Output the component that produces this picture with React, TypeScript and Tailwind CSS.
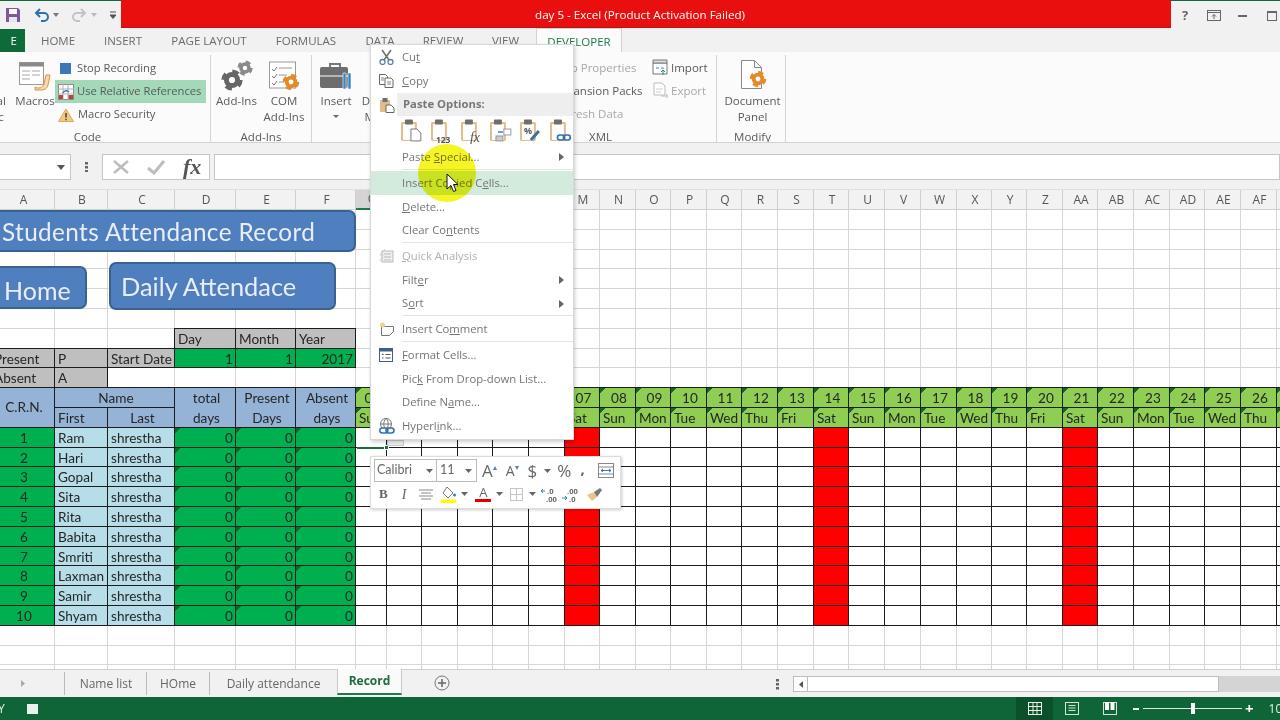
import React from "react";

const colLetters = "A B C D E F G H I J K L M N O P Q R S T U V W X Y Z AA AB AC AD AE AF AG".split(" ");
const dates = ["01","02","03","04","05","06","07","08","09","10","11","12","13","14","15","16","17","18","19","20","21","22","23","24","25","26","27"];
const dayNames = ["Sun","Mon","Tue","Wed","Thu","Fri","Sat"];
const students = ["Ram","Hari","Gopal","Sita","Rita","Babita","Smriti","Laxman","Samir","Shyam"];
const TRI = "bg-[linear-gradient(135deg,#17642c_4px,transparent_4px)]";
const GRID = "border-r border-b border-[#d6d6d6]";
const BLK = "border border-[#1c1c1c] ml-[-1px] mt-[-1px] relative overflow-hidden whitespace-nowrap pl-[3px] pr-[3px] leading-[21px]";
const CTR = "text-center !pl-[5px] !pr-[2px]";
const RGT = "text-right !pr-[2px]";

function Blank({ n = 1 }: { n?: number }) {
  return <>{Array.from({ length: n }).map((_, i) => <div key={i} className={GRID} />)}</>;
}

function Sheet() {
  const dataCols = 27;
  return (
    <div className="grid grid-cols-[64px_53px_67px_61px_60px_60px_31px_35px_36px_35px_36px_36px_35px_36px_35px_36px_35px_36px_36px_35px_36px_36px_36px_35px_35px_36px_35px_36px_36px_35px_36px_36px_36px] grid-rows-[20px] auto-rows-[19.8px] ml-[-9px] w-[1300px] text-[13.6px] text-[#262626] font-['Lato',sans-serif]">
      {colLetters.map((c, i) => (
        <div key={c} className={`flex items-center justify-center pl-[2px] border-r border-b font-['Open_Sans',sans-serif] text-[12px] text-[#555] ${i === 6 ? "bg-[#d4d4d4] border-r-[#bbb] border-b-2 border-b-[#1f7a4a]" : "bg-[#f2f2f2] border-[#cfcfcf]"}`}>{c}</div>
      ))}
      <Blank n={33 * 6} />
      {/* row 7 */}
      <Blank n={3} />
      {["Day", "Month", "Year"].map((t) => <div key={t} className={`${BLK} bg-[#bfbfbf]`}>{t}</div>)}
      <Blank n={27} />
      {/* row 8 */}
      <div className={`${BLK} bg-[#bfbfbf]`}>Present</div>
      <div className={`${BLK} bg-[#bfbfbf]`}>P</div>
      <div className={`${BLK} bg-[#bfbfbf]`}>Start Date</div>
      {["1", "1", "2017"].map((t, i) => <div key={i} className={`${BLK} ${RGT} bg-[#00b050]`}>{t}</div>)}
      <Blank n={27} />
      {/* row 9 */}
      <div className={`${BLK} bg-[#bfbfbf]`}>Absent</div>
      <div className={`${BLK} bg-[#bfbfbf]`}>A</div>
      <Blank n={31} />
      {/* row 10 */}
      <div className={`${BLK} row-span-2 bg-[#95b3d7] flex items-center justify-center !pl-[5px] !pr-[2px] pt-[1px]`}>C.R.N.</div>
      <div className={`${BLK} ${CTR} col-span-2 bg-[#95b3d7]`}>Name</div>
      {[["total", "days"], ["Present", "Days"], ["Absent", "days"]].map((t) => (
        <div key={t[0]} className={`${BLK} ${CTR} row-span-2 bg-[#95b3d7]`}>
          <div className="h-[20px]">{t[0]}</div>
          <div className="h-[20px]">{t[1]}</div>
        </div>
      ))}
      {dates.map((d) => <div key={d} className={`${BLK} ${CTR} ${TRI} bg-[#8fce52]`}>{d}</div>)}
      {/* row 11 */}
      <div className={`${BLK} bg-[#95b3d7]`}>First</div>
      <div className={`${BLK} ${CTR} bg-[#95b3d7]`}>Last</div>
      {dates.map((d, i) => <div key={d} className={`${BLK} ${TRI} bg-[#8fce52] !pl-[3px] !pr-0`}>{dayNames[i % 7]}</div>)}
      {/* data */}
      {students.map((s, r) => (
        <React.Fragment key={s}>
          <div className={`${BLK} ${CTR} bg-[#00b050]`}>{r + 1}</div>
          <div className={`${BLK} bg-[#b7dee8]`}>{s}</div>
          <div className={`${BLK} bg-[#b7dee8]`}>shrestha</div>
          {[0, 1, 2].map((k) => <div key={k} className={`${BLK} ${RGT} ${TRI} bg-[#00b050]`}>0</div>)}
          {Array.from({ length: dataCols }).map((_, i) => (
            <div key={i} className={`${BLK} ${i % 7 === 6 ? "bg-[#ff0000]" : "bg-white"}`} />
          ))}
        </React.Fragment>
      ))}
      <Blank n={33 * 3} />
    </div>
  );
}

function Gear({ cx, cy, r, c }: { cx: number; cy: number; r: number; c: string }) {
  return (
    <g>
      <circle cx={cx} cy={cy} r={r * 0.62} fill="none" stroke={c} strokeWidth={r * 0.55} />
      <circle cx={cx} cy={cy} r={r * 0.98} fill="none" stroke={c} strokeWidth={r * 0.4} strokeDasharray={`${r * 0.75} ${r * 0.79}`} />
    </g>
  );
}

function BigBtn({ w, icon, lines, caret }: { w: string; icon: React.ReactNode; lines: string[]; caret?: boolean }) {
  return (
    <div className={`${w} shrink-0 flex flex-col items-center text-center leading-[16px]`}>
      <div className="h-[38px] shrink-0 flex items-center justify-center pt-[3px]">{icon}</div>
      {lines.map((l) => <div key={l} className="whitespace-nowrap shrink-0">{l}</div>)}
      {caret && (
        <svg className="mt-[6px] shrink-0" width="6" height="3" viewBox="0 0 6 3"><path d="M0 0h6L3 3z" fill="#666" /></svg>
      )}
    </div>
  );
}

function Group({ w, label, labelCls = "", children }: { w: string; label: string; labelCls?: string; children: React.ReactNode }) {
  return (
    <div className={`${w} shrink-0 relative flex flex-col h-[87px] mt-[3px] border-r border-[#d4d4d4]`}>
      <div className="h-[71px] shrink-0 flex">{children}</div>
      <div className={`h-[16px] shrink-0 text-center leading-[21px] ${labelCls}`}>{label}</div>
    </div>
  );
}

function Ribbon() {
  return (
    <div className="h-[91px] flex bg-[#fbfbfb] border-b border-[#d2d2d2] font-['Open_Sans',sans-serif] text-[11.5px] text-[#5a5a5a] overflow-hidden">
      <Group w="w-[246px] ml-[-35px]" label="Code">
        <BigBtn w="w-[50px]" lines={["Visual", "Basic"]} icon={
          <svg width="32" height="30" viewBox="0 0 32 30"><rect x="3" y="2" width="22" height="24" fill="#fff" stroke="#8a8a8a" /><path d="M6 8h16M6 13h16M6 18h16M14 4v20" stroke="#9a9a9a" /></svg>
        } />
        <BigBtn w="w-[40px]" lines={["Macros"]} icon={
          <svg width="34" height="30" viewBox="0 0 34 30"><rect x="1.5" y="1.5" width="24" height="22" fill="#fff" stroke="#9a9a9a" /><rect x="1.5" y="1.5" width="24" height="4" fill="#8a8a8a" /><path d="M4 10h8M14 10h8M4 14h8M14 14h8M4 18h8" stroke="#a8a8a8" /><path d="M17 26c3 2 8 1 9-3l2-9h4l-2 10c-1 4-4 5-7 5h-6z" fill="#f3d9b5" stroke="#e0913a" /></svg>
        } />
        <div className="w-[153px] flex flex-col pt-[2px] text-[11.2px]">
          <div className="h-[23px] shrink-0 flex items-center pl-[5px] gap-[6px]">
            <div className="w-[11px] h-[11px] bg-[#3d78b5]" /><span>Stop Recording</span>
          </div>
          <div className="h-[23px] shrink-0 w-[151px] flex items-center pl-[3px] gap-[3px] bg-[#a3d8b8]">
            <svg width="16" height="16" viewBox="0 0 16 16"><rect x=".5" y=".5" width="15" height="15" fill="#fff" stroke="#8c8c8c" /><path d="M0 5h16M0 10h16M5 0v16M10 0v16" stroke="#b0b0b0" /><rect x="1" y="11" width="4" height="4" fill="#b5463a" /><rect x="10.5" y="11" width="4.500" height="4" fill="#b5463a" /><path d="M5 9a3.500 3.500 0 0 1 6-1" stroke="#3d78b5" strokeWidth="1.500" fill="none" /></svg>
            <span>Use Relative References</span>
          </div>
          <div className="h-[23px] shrink-0 flex items-center pl-[3px] gap-[4px]">
            <svg width="16" height="14" viewBox="0 0 16 14"><path d="M8 1l7.500 12.500h-15z" fill="#eccb8a" stroke="#d9a95a" /><path d="M8 5v4.500M8 10.800v1.500" stroke="#5a4620" strokeWidth="1.600" /></svg>
            <span>Macro Security</span>
          </div>
        </div>
      </Group>
      <Group w="w-[101px]" label="Add-Ins">
        <BigBtn w="w-[51px]" lines={["Add-Ins"]} icon={
          <svg width="34" height="32" viewBox="0 0 34 32"><Gear cx={12} cy={20} r={9} c="#666" /><Gear cx={25} cy={8} r={6.500} c="#8a8a8a" /></svg>
        } />
        <BigBtn w="w-[44px]" lines={["COM", "Add-Ins"]} icon={
          <svg width="32" height="32" viewBox="0 0 32 32"><rect x="1.500" y="2" width="26" height="26" fill="#fff" stroke="#9a9a9a" /><path d="M4 9l2 2 3-4M4 16l2 2 3-4M4 23l2 2 3-4" stroke="#777" fill="none" /><path d="M11 8h13M11 15h8M11 22h5" stroke="#999" /><Gear cx={23} cy={22} r={7} c="#e48a2a" /></svg>
        } />
      </Group>
      <div className="w-[240px] shrink-0 flex flex-col h-[87px] mt-[3px]">
        <div className="flex">
          <BigBtn w="w-[48px]" lines={["Insert"]} caret icon={
            <svg width="34" height="30" viewBox="0 0 34 30"><path d="M11 6V3h10v3" stroke="#777" strokeWidth="2" fill="none" /><rect x="1" y="6" width="28" height="21" rx="2" fill="#6d6d6d" /><path d="M1 15h28" stroke="#fff" /><path d="M24 12h3v16h-3zM29 12h3v16h-3z" fill="#3a82c4" stroke="#fff" strokeWidth=".6" /></svg>
          } />
          <BigBtn w="w-[40px]" lines={["Design", "Mode"]} icon={<div className="w-[20px] h-[28px] bg-[#777]" />} />
        </div>
      </div>
      <Group w="w-[166px] ml-[-1px]" label="XML" labelCls="pr-[66px]">
        <div className="w-[101px] shrink-0 flex flex-col pt-[1px] pl-[3px] whitespace-nowrap">
          <div className="h-[23px] shrink-0 leading-[23px] text-[#a8a8a8]">Map Properties</div>
          <div className="h-[23px] shrink-0 leading-[23px]">Expansion Packs</div>
          <div className="h-[23px] shrink-0 leading-[23px] text-[#a8a8a8]">Refresh Data</div>
        </div>
        <div className="flex flex-col pt-[1px]">
          <div className="h-[23px] shrink-0 flex items-center gap-[1px]">
            <svg width="18" height="17" viewBox="0 0 18 17"><path d="M1 4h14v11H1z" fill="#fff" stroke="#777" /><path d="M1 1h14v3H1z" fill="#ddd" stroke="#777" /><path d="M4 9h3M9 9h3" stroke="#3a82c4" /><path d="M11 16V11M9 13l2-2 2 2" stroke="#1f9a5a" fill="none" /></svg>
            <span>Import</span>
          </div>
          <div className="h-[23px] shrink-0 flex items-center gap-[1px] text-[#a8a8a8]">
            <svg width="18" height="17" viewBox="0 0 18 17"><path d="M2 1h8l3 3v9H2z" fill="#fff" stroke="#bbb" /><path d="M4 7h7M4 10h5" stroke="#ccc" /><path d="M9 14h7M14 12l2 2-2 2" stroke="#bbb" fill="none" /></svg>
            <span>Export</span>
          </div>
        </div>
      </Group>
      <Group w="w-[69px] pl-[3px]" label="Modify">
        <BigBtn w="w-full" lines={["Document", "Panel"]} icon={
          <svg width="30" height="33" viewBox="0 0 30 33"><path d="M3.500 1.500h13l7 7v21h-20z" fill="#fff" stroke="#8a8a8a" /><path d="M16.500 1.500v7h7" fill="none" stroke="#8a8a8a" /><Gear cx={20} cy={20} r={7} c="#e48a2a" /></svg>
        } />
      </Group>
    </div>
  );
}

function Tabs() {
  const tabs: [string, string][] = [["HOME", "w-[66px]"], ["INSERT", "w-[64px]"], ["PAGE LAYOUT", "w-[108px]"], ["FORMULAS", "w-[86px]"], ["DATA", "w-[62px]"], ["REVIEW", "w-[64px]"], ["VIEW", "w-[61px]"]];
  return (
    <div className="h-[24px] flex bg-[#f1f1f1] font-['Open_Sans',sans-serif] text-[11.5px] text-[#6a6a6a]">
      <div className="w-[25px] bg-[#0f6a3a] text-white flex items-center justify-end pr-[8px] mt-[1px]">E</div>
      {tabs.map(([t, w]) => <div key={t} className={`${w} flex items-center justify-center pt-[1px]`}>{t}</div>)}
      <div className="w-[86px] h-[25px] flex items-center justify-center pt-[1px] bg-[#fbfbfb] border-x border-t border-[#d2d2d2] text-[#1f7a4a]">DEVELOPER</div>
    </div>
  );
}

function TitleBar() {
  return (
    <div className="h-[28px] flex bg-[#f1f1f1] border-t border-[#14673c] font-['Open_Sans',sans-serif]">
      <div className="w-[121px] flex items-center relative">
        <svg className="ml-[5px]" width="16" height="16" viewBox="0 0 16 16"><path d="M1 1h12l2 2v12H1z" fill="#7a5a9a" /><rect x="4" y="2" width="8" height="5" fill="#fff" /><rect x="4" y="10" width="8" height="5" fill="#e9e4ef" /></svg>
        <svg className="ml-[13px]" width="16" height="14" viewBox="0 0 16 14"><path d="M6 1L2 5l4 4M2 5h8a4 4 0 0 1 0 8H7" fill="none" stroke="#2f6fb0" strokeWidth="2" /></svg>
        <svg className="ml-[3px]" width="6" height="4" viewBox="0 0 6 4"><path d="M0 0h6L3 4z" fill="#777" /></svg>
        <svg className="ml-[12px]" width="16" height="14" viewBox="0 0 16 14"><path d="M10 1l4 4-4 4M14 5H6a4 4 0 0 0 0 8h3" fill="none" stroke="#c4c4c4" strokeWidth="2" /></svg>
        <svg className="ml-[4px]" width="6" height="4" viewBox="0 0 6 4"><path d="M0 0h6L3 4z" fill="#bbb" /></svg>
        <svg className="ml-[13px]" width="6" height="8" viewBox="0 0 6 8"><path d="M0 1h6M0 4h6L3 7.500 0 4" stroke="#555" fill="#555" /></svg>
      </div>
      <div className="w-[1050px] h-[28px] mt-[-1px] bg-[#ea0f0f] border-b border-[#b31818] flex items-center justify-center pt-[2px] pr-[12px] text-white text-[11.6px]">day 5 - Excel (Product Activation Failed)</div>
      <div className="flex-1 relative flex items-center text-[#666] pt-[2px]">
        <span className="ml-[11px] w-[10px] font-bold text-[13px]">?</span>
        <svg className="ml-[15px]" width="14" height="11" viewBox="0 0 14 11"><rect x=".5" y=".5" width="13" height="10" fill="none" stroke="#666" /><path d="M.5 2.500h13M7 9V4.500M5 6.500l2-2 2 2" stroke="#666" fill="none" /></svg>
        <div className="ml-[17px] w-[9px] h-[2px] bg-[#666]" />
        <div className="ml-[20px] w-[10px] h-[10px] border border-t-2 border-[#666] shrink-0" />
      </div>
    </div>
  );
}

function FormulaBar() {
  return (
    <div className="h-[47px] bg-[#f1f1f1] flex items-start pt-[11px] font-['Open_Sans',sans-serif] border-b border-[#e0e0e0]">
      <div className="w-[71px] h-[26px] bg-white border border-[#c6c6c6] border-l-0 flex items-center justify-end pr-[5px]">
        <svg width="8" height="5" viewBox="0 0 8 5"><path d="M0 0h8L4 5z" fill="#555" /></svg>
      </div>
      <div className="w-[31px] h-[26px] flex items-center justify-center">
        <svg width="3" height="10" viewBox="0 0 3 10"><path d="M0 0h3v2.500H0zM0 4h3v2.500H0zM0 8h3v2H0z" fill="#666" /></svg>
      </div>
      <div className="w-[108px] h-[26px] bg-white border border-[#c6c6c6] flex items-center">
        <svg className="ml-[9px]" width="18" height="16" viewBox="0 0 18 16"><path d="M2 2l14 12M16 2L2 14" stroke="#bdbdbd" strokeWidth="2.500" /></svg>
        <svg className="ml-[16px]" width="20" height="16" viewBox="0 0 20 16"><path d="M2 9l6 5L18 2" stroke="#bdbdbd" strokeWidth="3" fill="none" /></svg>
        <span className="ml-[17px] font-['Liberation_Serif',serif] italic font-bold text-[22px] text-[#555] leading-none">fx</span>
      </div>
      <div className="ml-[4px] flex-1 h-[26px] bg-white border border-[#c6c6c6]" />
    </div>
  );
}

function Shape({ cls, text, textCls }: { cls: string; text: string; textCls: string }) {
  return (
    <div className={`absolute bg-[#4f7fbe] border-2 border-[#3a628f] rounded-[7px] text-[#e9eef6] font-['Lato',sans-serif] flex items-center whitespace-nowrap ${cls}`}>
      <span className={textCls}>{text}</span>
    </div>
  );
}

function Clip({ children }: { children?: React.ReactNode }) {
  return (
    <svg width="24" height="26" viewBox="0 0 24 26">
      <rect x="1" y="4" width="16" height="19" rx="1.500" fill="#e2bd8c" />
      <rect x="3" y="6" width="12" height="16" fill="#fff" />
      <rect x="5" y="1.500" width="8" height="5" rx="1" fill="#6e6e6e" />
      {children}
    </svg>
  );
}

function MenuItem({ h, label, icon, disabled, arrow, hot }: { h: string; label: React.ReactNode; icon?: React.ReactNode; disabled?: boolean; arrow?: boolean; hot?: boolean }) {
  return (
    <div className={`${h} flex items-center ${hot ? "bg-[#d2ebdd]" : ""} ${disabled ? "text-[#b0b0b0]" : "text-[#757575]"}`}>
      <div className="w-[31px] flex justify-center shrink-0">{icon}</div>
      <div className="flex-1 whitespace-nowrap">{label}</div>
      {arrow && <svg className="mr-[9px]" width="5" height="8" viewBox="0 0 5 8"><path d="M0 0l5 4-5 4z" fill="#666" /></svg>}
    </div>
  );
}

const Sep = () => <div className="h-[2px] pl-[31px]"><div className="h-px bg-[#e4e4e4]" /></div>;

function ContextMenu() {
  return (
    <div className="absolute left-[370px] top-[44px] w-[204px] h-[396px] bg-white border border-[#d8d8d8] shadow-[1px_2px_4px_rgba(0,0,0,0.2)] font-['Open_Sans',sans-serif] text-[11.3px]">
      <MenuItem h="h-[24px]" label={<>Cu<u>t</u></>} icon={
        <svg width="15" height="16" viewBox="0 0 15 16"><path d="M3 1l7 10M12 1L5 11" stroke="#6e6e6e" strokeWidth="1.500" /><circle cx="3.500" cy="13" r="2.500" fill="none" stroke="#5b7fa8" strokeWidth="1.300" /><circle cx="11.500" cy="13" r="2.500" fill="none" stroke="#5b7fa8" strokeWidth="1.300" /></svg>
      } />
      <MenuItem h="h-[24px]" label={<><u>C</u>opy</>} icon={
        <svg width="15" height="14" viewBox="0 0 15 14"><path d="M.5.500h6l2 2v8h-8z" fill="#fff" stroke="#666" /><path d="M6 4h6l2 2v7.500H6z" fill="#fff" stroke="#666" /><path d="M2 4h3M2 6h3M8 8h4M8 10h4" stroke="#888" /></svg>
      } />
      <div className="h-[23px] flex items-center">
        <div className="w-[25px] flex justify-end shrink-0 pr-[1px]">
          <svg width="16" height="16" viewBox="0 0 16 16"><rect x="1" y="3" width="10" height="12" fill="#e2bd8c" /><rect x="3.500" y="1" width="5" height="4" fill="#6e6e6e" /><path d="M7 8h5l3 3v4.500H7z" fill="#fff" stroke="#666" /></svg>
        </div>
        <div className="flex-1 h-full ml-[1px] bg-[#eeeeee] flex items-center pl-[6px] font-bold text-[#777]">Paste Options:</div>
      </div>
      <div className="h-[29px] flex items-center pl-[29px] gap-[6px]">
        <Clip><path d="M11 11h6l4 4v8H11z" fill="#fff" stroke="#777" /></Clip>
        <Clip><text x="6" y="25" fontSize="8.500" fontWeight="700" fill="#555" fontFamily="Open Sans">123</text></Clip>
        <Clip><text x="10" y="24" fontSize="14" fontStyle="italic" fill="#555" fontFamily="Liberation Serif">fx</text></Clip>
        <Clip><path d="M9 14h5M14 19H9" stroke="#3a82c4" strokeWidth="1.500" /><rect x="15" y="11" width="7" height="6" fill="#fff" stroke="#999" /><rect x="7" y="18" width="7" height="5" fill="#ccc" stroke="#999" /></Clip>
        <Clip><text x="5" y="16" fontSize="9" fontWeight="700" fill="#555" fontFamily="Open Sans">%</text><path d="M12 22l8-9" stroke="#3a6ea5" strokeWidth="3" /></Clip>
        <Clip><rect x="8.500" y="17" width="7" height="5" rx="2.500" fill="none" stroke="#2f6fb0" strokeWidth="1.600" /><rect x="14.500" y="17" width="7" height="5" rx="2.500" fill="none" stroke="#2f6fb0" strokeWidth="1.600" /></Clip>
      </div>
      <MenuItem h="h-[24px]" arrow label={<>Paste <u>S</u>pecial...</>} />
      <Sep />
      <MenuItem h="h-[24px]" hot label={<>Insert Copied C<u>e</u>lls...</>} />
      <MenuItem h="h-[24px]" label={<><u>D</u>elete...</>} />
      <MenuItem h="h-[23px]" label={<>Clear Co<u>n</u>tents</>} />
      <Sep />
      <MenuItem h="h-[24px]" disabled label={<><u>Q</u>uick Analysis</>} icon={
        <svg width="15" height="14" viewBox="0 0 15 14"><rect x="3" y="2" width="11" height="11" fill="#eee" stroke="#bbb" /><path d="M5 5h7M5 8h7M5 11h7" stroke="#bbb" /><path d="M6 0L1 6h3L1 12" stroke="#ccc" fill="none" /></svg>
      } />
      <MenuItem h="h-[24px]" arrow label={<>Filt<u>e</u>r</>} />
      <MenuItem h="h-[23px]" arrow label={<>S<u>o</u>rt</>} />
      <Sep />
      <MenuItem h="h-[24px]" label={<>Insert Co<u>m</u>ment</>} icon={
        <svg width="16" height="15" viewBox="0 0 16 15"><path d="M2.500 4.500h12v5l-4 4h-8z" fill="#fff" stroke="#777" /><circle cx="3.500" cy="3" r="2.500" fill="#f2cf8a" /></svg>
      } />
      <Sep />
      <MenuItem h="h-[24px]" label={<><u>F</u>ormat Cells...</>} icon={
        <svg width="15" height="15" viewBox="0 0 15 15"><rect x=".5" y=".5" width="13" height="13" fill="#fff" stroke="#3f5f88" /><rect x=".5" y=".5" width="13" height="3" fill="#3f5f88" /><path d="M3 6.500h1.500M3 10h1.500M6.500 6.500h5M6.500 10h5" stroke="#555" /></svg>
      } />
      <MenuItem h="h-[24px]" label={<>Pic<u>k</u> From Drop-down List...</>} />
      <MenuItem h="h-[23px]" label={<>Define N<u>a</u>me...</>} />
      <MenuItem h="h-[24px]" label={<>Hyperl<u>i</u>nk...</>} icon={
        <svg width="16" height="16" viewBox="0 0 16 16"><circle cx="7" cy="6" r="5.500" fill="none" stroke="#777" /><path d="M1.500 6h11M7 .500c-3 3-3 8 0 11M7 .500c3 3 3 8 0 11" fill="none" stroke="#777" /><rect x=".8" y="10" width="8" height="5" rx="2.500" fill="#fff" stroke="#2f6fb0" strokeWidth="1.500" /><rect x="7" y="10" width="8" height="5" rx="2.500" fill="none" stroke="#2f6fb0" strokeWidth="1.500" /></svg>
      } />
    </div>
  );
}

const Caret = ({ c = "#666", cls = "" }: { c?: string; cls?: string }) => (
  <svg className={cls} width="7" height="4" viewBox="0 0 7 4"><path d="M0 0h7L3.500 4z" fill={c} /></svg>
);

function MiniBar() {
  return (
    <div className="absolute left-[370px] top-[456px] w-[251px] h-[53px] bg-white border border-[#dcdcdc] shadow-[1px_1px_3px_rgba(0,0,0,0.2)] text-[#666] font-['Open_Sans',sans-serif] text-[11.5px]">
      <div className="h-[26px] flex items-center pl-[3px] pt-[1px]">
        <div className="w-[63px] h-[23px] border border-[#bbb] flex items-center justify-between pl-[2px] pr-[3px] font-['Lato',sans-serif] text-[12.5px]">Calibri<Caret /></div>
        <div className="w-[40px] h-[23px] border border-l-0 border-[#bbb] flex items-center justify-between pl-[3px] pr-[4px] font-['Lato',sans-serif] text-[12.5px]">11<Caret /></div>
        <span className="ml-[5px] text-[17px] leading-none">A</span><sup className="text-[#5b7fa8] text-[8px]">▴</sup>
        <span className="ml-[9px] text-[14px] leading-none">A</span><sup className="text-[#5b7fa8] text-[8px]">▾</sup>
        <span className="ml-[9px] text-[17px] leading-none">$</span>
        <Caret cls="ml-[7px]" />
        <span className="ml-[6px] text-[17px] leading-none">%</span>
        <span className="ml-[9px] text-[15px] font-bold leading-none mt-[-5px]">,</span>
        <svg className="ml-[13px]" width="16" height="15" viewBox="0 0 16 15"><rect x=".5" y=".5" width="15" height="14" fill="#fff" stroke="#888" /><path d="M0 4h16M0 11h16" stroke="#888" /><path d="M3 7.500h10M3 7.500l2-1.500M3 7.500l2 1.500M13 7.500l-2-1.500M13 7.500l-2 1.500" stroke="#3a7ab5" /></svg>
      </div>
      <div className="h-[22px] flex items-center pl-[8px]">
        <span className="font-bold text-[13px] font-['Liberation_Serif',serif]">B</span>
        <span className="ml-[14px] italic font-['Liberation_Serif',serif] text-[14px]">I</span>
        <svg className="ml-[13px]" width="14" height="11" viewBox="0 0 14 11"><path d="M0 1h14M2 4h10M0 7h14M2 10h10" stroke="#888" /></svg>
        <svg className="ml-[8px]" width="16" height="17" viewBox="0 0 16 17"><path d="M6 1l6 6-5 5-5-5z" fill="#fff" stroke="#777" /><circle cx="13.500" cy="9" r="1.500" fill="#3a7ab5" /><rect y="13.500" width="15" height="3.500" fill="#ffff00" /></svg>
        <Caret cls="ml-[4px]" />
        <div className="ml-[7px] flex flex-col items-center w-[16px]">
          <span className="text-[13px] leading-[13px]">A</span>
          <div className="w-[16px] h-[3px] bg-[#e00000]" />
        </div>
        <Caret cls="ml-[5px]" />
        <svg className="ml-[7px]" width="13" height="13" viewBox="0 0 13 13"><rect x=".5" y=".5" width="12" height="12" fill="none" stroke="#c4c4c4" /><path d="M6.500 0v13M0 6.500h13" stroke="#c4c4c4" /></svg>
        <Caret cls="ml-[6px]" />
        <svg className="ml-[5px]" width="18" height="15" viewBox="0 0 18 15"><text x="6" y="7" fontSize="7.500" fill="#666" fontWeight="700" fontFamily="Open Sans">.0</text><text x="5" y="15" fontSize="7.500" fill="#666" fontWeight="700" fontFamily="Open Sans">.00</text><path d="M0 4h4M0 4l2-2M0 4l2 2" stroke="#3a7ab5" /></svg>
        <svg className="ml-[3px]" width="18" height="15" viewBox="0 0 18 15"><text x="5" y="7" fontSize="7.500" fill="#666" fontWeight="700" fontFamily="Open Sans">.00</text><text x="7" y="15" fontSize="7.500" fill="#666" fontWeight="700" fontFamily="Open Sans">.0</text><path d="M0 11h5M5 11L3 9M5 11l-2 2" stroke="#3a7ab5" /></svg>
        <svg className="ml-[6px]" width="17" height="14" viewBox="0 0 17 14"><path d="M1 8l7-3 3 5-5 4z" fill="#e8c48e" /><path d="M8 5l6-4 2 2-5 7z" fill="#777" /></svg>
      </div>
    </div>
  );
}

function SheetTabs() {
  return (
    <div className="h-[28px] flex bg-[#f1f1f1] font-['Open_Sans',sans-serif] text-[12px] text-[#666] border-t border-[#d0d0d0]">
      <div className="w-[65px] flex items-center pl-[21px] border-r border-[#bbb] my-[2px]">
        <svg width="4" height="7" viewBox="0 0 4 7"><path d="M0 0l4 3.500L0 7z" fill="#aaa" /></svg>
      </div>
      <div className="w-[82px] flex items-center justify-center border-r border-[#bbb] my-[2px] pl-[1px]">Name list</div>
      <div className="w-[63px] flex items-center justify-center border-r border-[#bbb] my-[2px]">HOme</div>
      <div className="w-[127px] flex items-center justify-center">Daily attendance</div>
      <div className="w-[65px] h-[26px] mt-[-1px] flex items-center justify-center bg-[#fafafa] border-x border-[#c8c8c8] border-b-2 border-b-[#1f7a4a] font-bold text-[#1f6b40]">Record</div>
      <svg className="ml-[32px] mt-[5px]" width="16" height="16" viewBox="0 0 16 16"><circle cx="8" cy="8" r="7" fill="none" stroke="#777" /><path d="M4 8h8M8 4v8" stroke="#666" strokeWidth="1.500" /></svg>
      <div className="ml-[326px] mt-[9px]">
        <svg width="3" height="11" viewBox="0 0 3 11"><path d="M0 0h3v2.500H0zM0 4h3v2.500H0zM0 8h3v2.500H0z" fill="#666" /></svg>
      </div>
      <div className="ml-[14px] mt-[6px] flex-1 h-[16px] flex bg-[#d4d4d4]">
        <div className="w-[426px] h-full bg-white border border-[#bdbdbd] flex">
          <div className="w-[14px] border-r border-[#bdbdbd] flex items-center justify-center">
            <svg width="4" height="7" viewBox="0 0 4 7"><path d="M4 0L0 3.500 4 7z" fill="#555" /></svg>
          </div>
        </div>
      </div>
    </div>
  );
}

function StatusBar() {
  return (
    <div className="h-[23px] flex items-center bg-[#0f6537] font-['Open_Sans',sans-serif] text-[12px] text-[#e8f1ec]">
      <span className="ml-[-2px] w-[9px] shrink-0">Y</span>
      <div className="ml-[20px] w-[11px] h-[10px] bg-[#e8f1ec] shrink-0" />
      <div className="ml-[978px] w-[37px] h-full bg-[#0b4f2b] flex items-center justify-center shrink-0">
        <svg width="14" height="13" viewBox="0 0 14 13"><rect x=".5" y=".5" width="13" height="12" fill="none" stroke="#e8f1ec" /><path d="M5 0v13M9 0v13M0 4.500h14M0 8.500h14" stroke="#e8f1ec" /></svg>
      </div>
      <svg className="ml-[12px] shrink-0" width="14" height="13" viewBox="0 0 14 13"><rect x=".5" y=".5" width="13" height="12" fill="none" stroke="#cfe5d8" /><path d="M3.500 3.500h7M3.500 6h7M3.500 8.500h7" stroke="#cfe5d8" /></svg>
      <svg className="ml-[24px] shrink-0" width="14" height="13" viewBox="0 0 14 13"><rect x=".5" y=".5" width="13" height="12" fill="none" stroke="#cfe5d8" /><rect x="2" y="0" width="4" height="8" fill="#fff" /><rect x="7.500" y="0" width="4" height="8" fill="#fff" /></svg>
      <div className="ml-[16px] w-[6px] h-[2px] bg-white shrink-0" />
      <div className="ml-[4px] w-[99px] h-px bg-[#dbe9e1] flex justify-center items-center shrink-0">
        <div className="w-[4px] h-[11px] bg-white shrink-0" />
      </div>
      <span className="ml-[3px] text-[15px] font-bold text-white leading-none shrink-0">+</span>
      <span className="ml-[15px] whitespace-nowrap shrink-0">100%</span>
    </div>
  );
}

export default function App() {
  return (
    <div className="relative w-[1280px] h-[720px] overflow-hidden bg-white flex flex-col">
      <TitleBar />
      <Tabs />
      <Ribbon />
      <FormulaBar />
      <div className="flex-1 relative overflow-hidden min-h-0">
        <Sheet />
        <Shape cls="left-[-20px] top-[20px] w-[376px] h-[42px] pl-[20px]" text="Students Attendance Record" textCls="text-[24.3px] tracking-[0.4px] mt-[3px]" />
        <Shape cls="left-[-20px] top-[76px] w-[107px] h-[43px] pl-[22px]" text="Home" textCls="text-[25px] mt-[7px]" />
        <Shape cls="left-[109px] top-[72px] w-[227px] h-[48px] pl-[10px]" text="Daily Attendace" textCls="text-[25.4px] mt-[1px]" />
      </div>
      <SheetTabs />
      <StatusBar />
      <div className="absolute left-[357px] top-[447px] w-[30px] h-[2px] bg-[#1f6b40]" />
      <div className="absolute left-[384px] top-[445px] w-[5px] h-[5px] bg-[#1f6b40] border border-white" />
      <div className="absolute left-[387px] top-[440px] w-[17px] h-[6px] bg-[#eeeeee] border border-[#ccc]" />
      <ContextMenu />
      <MiniBar />
      <div className="absolute left-[418px] top-[144px] w-[58px] h-[58px] rounded-full bg-[#f4f400] opacity-85 mix-blend-multiply" />
      <svg className="absolute left-[446px] top-[173px]" width="14" height="20" viewBox="0 0 14 20"><path d="M1 1v15l4-3.500 2.500 6 2.500-1-2.500-6H12z" fill="#fff" stroke="#111" strokeWidth="1" /></svg>
    </div>
  );
}
